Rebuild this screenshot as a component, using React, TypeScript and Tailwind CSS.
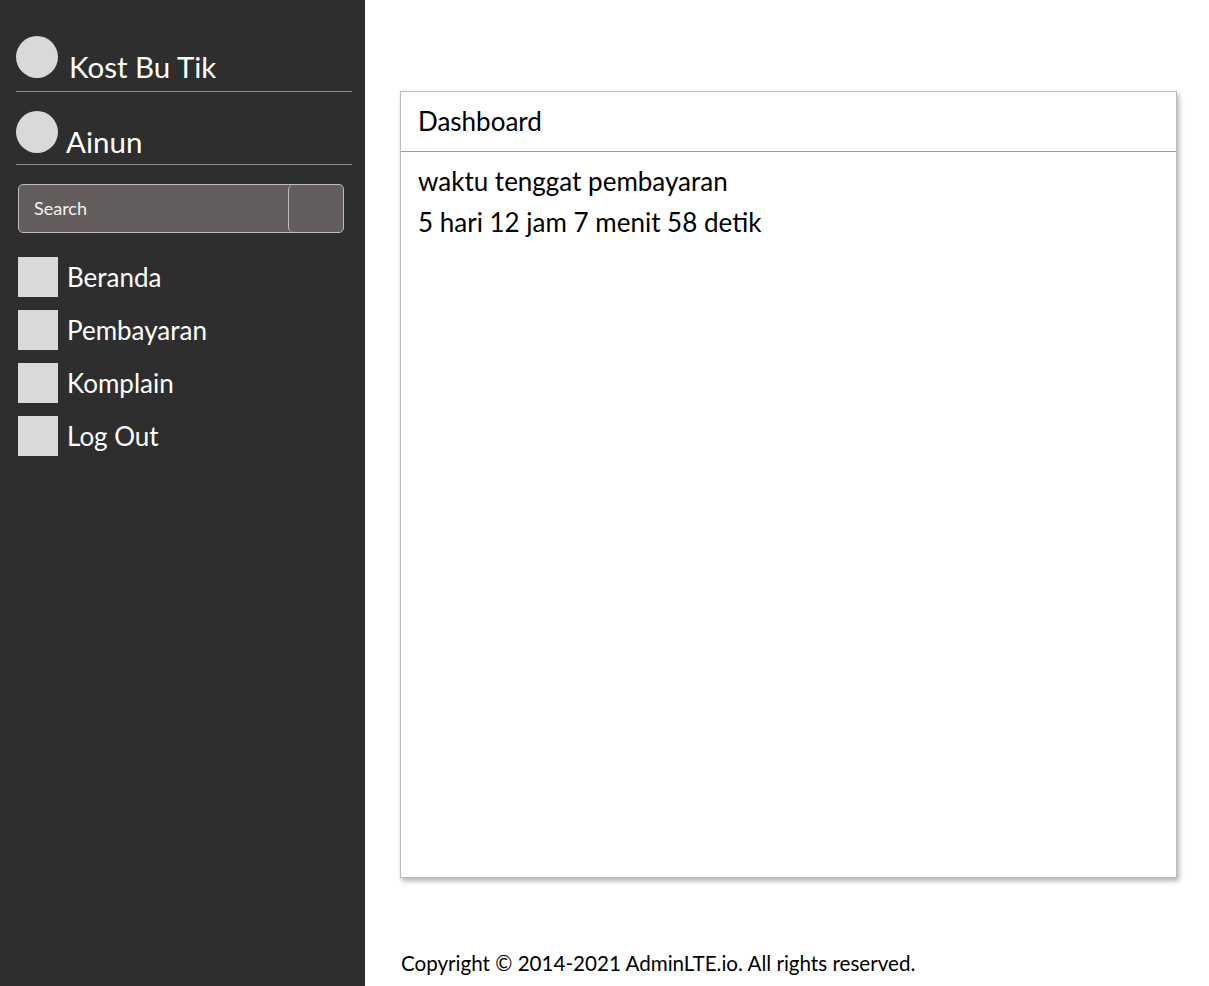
import React from 'react'

const menu = ['Beranda', 'Pembayaran', 'Komplain', 'Log Out']

export default function App() {
  return (
    <div className="flex min-h-[986px] w-full bg-white font-['Lato',sans-serif]">
      {/* Sidebar */}
      <aside className="w-[365px] shrink-0 bg-[#2e2e2e] pl-4 pr-[13px] pt-9 text-white">
        <div className="flex items-end gap-[11px] border-b border-[#8a8a8a] pb-[13px]">
          <div className="h-[42px] w-[42px] rounded-full bg-[#d9d9d9]" />
          <span className="text-[29.5px] leading-[30px] translate-y-[4px]">Kost Bu Tik</span>
        </div>
        <div className="mt-[19px] flex items-end gap-[8px] border-b border-[#8a8a8a] pb-[11px]">
          <div className="h-[42px] w-[42px] rounded-full bg-[#d9d9d9]" />
          <span className="text-[29.5px] leading-[30px] translate-y-[4px]">Ainun</span>
        </div>

        {/* Search */}
        <div className="ml-[2px] mt-[19px] flex h-[49px] w-[326px] rounded-[5px] border border-[#bdbdbd] bg-[#635d5d]">
          <div className="flex flex-1 items-center pl-[15px] text-[18px] text-[#f2f2f2]">Search</div>
          <div className="w-[55px] rounded-[5px] border-l border-[#bdbdbd]" />
        </div>

        {/* Menu */}
        <nav className="ml-[2px] mt-[24px] flex flex-col gap-[13px]">
          {menu.map((m) => (
            <div key={m} className="flex items-center gap-[9px]">
              <div className="h-[40px] w-[40px] bg-[#d9d9d9]" />
              <span className="text-[26px] leading-[30px]">{m}</span>
            </div>
          ))}
        </nav>
      </aside>

      {/* Main */}
      <main className="flex flex-1 flex-col pl-[35px] pr-[32px] pt-[91px] text-black">
        <div className="flex h-[787px] flex-col border border-[#bbbbbb] shadow-[2px_3px_5px_rgba(0,0,0,0.3)]">
          <div className="flex h-[60px] items-center border-b border-[#9a9a9a] px-[17px] text-[26px]">
            Dashboard
          </div>
          <div className="px-[17px] pt-[9px] text-[26px] leading-[41px]">
            <div>waktu tenggat pembayaran</div>
            <div>5 hari 12 jam 7 menit 58 detik</div>
          </div>
        </div>
        <footer className="ml-px mt-[73px] text-[20.6px] leading-[24px]">
          Copyright © 2014-2021 AdminLTE.io. All rights reserved.
        </footer>
      </main>
    </div>
  )
}
